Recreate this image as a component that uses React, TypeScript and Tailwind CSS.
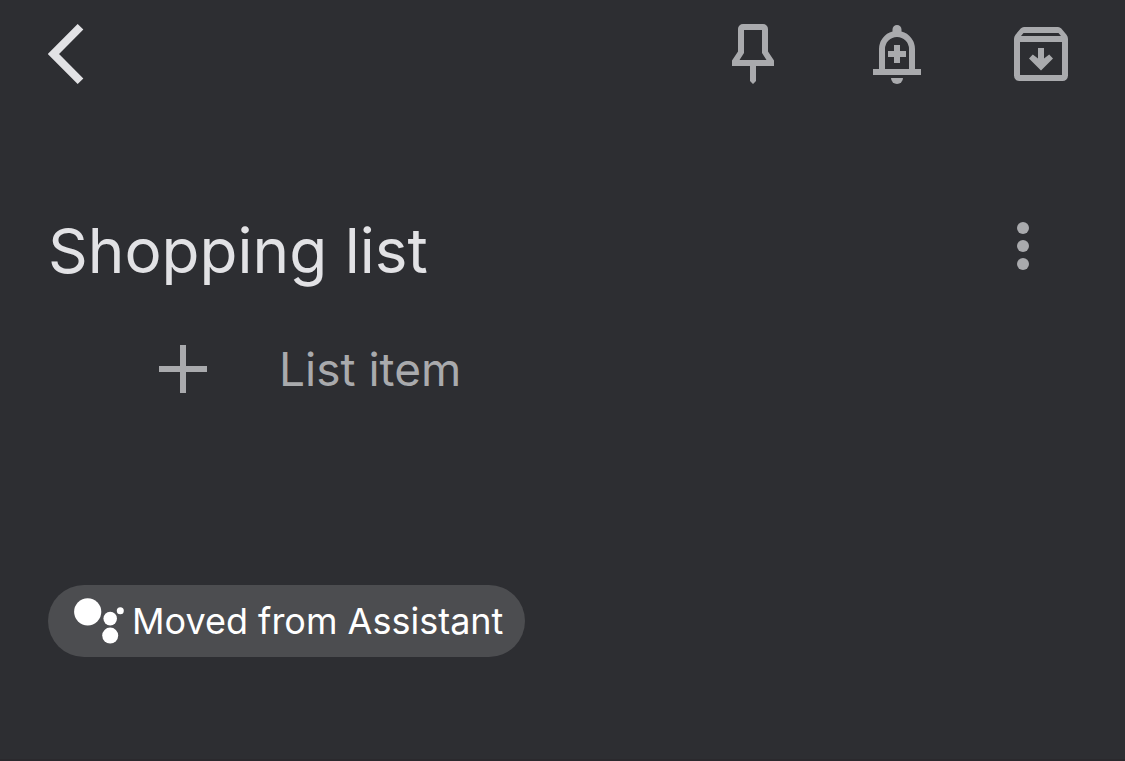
// ─── Icons ───────────────────────────────────────────────────────────────────

function BackIcon() {
  return (
    <svg className="h-[60px] w-9" viewBox="0 0 36 60" fill="none" stroke="currentColor" strokeWidth={8} aria-hidden="true">
      <path d="M32.5 2.8L5.5 30l27 27.2" />
    </svg>
  );
}

function PinIcon() {
  return (
    <svg className="size-18" viewBox="0 0 72 72" fill="currentColor" aria-hidden="true">
      <path
        fillRule="evenodd"
        d="M26 6h20a5 5 0 0 1 5 5v22.500l6 9V48H39v15l-3 3-3-3V48H15v-5.500l6-9V11a5 5 0 0 1 5-5zm1 6v23l-4.500 7h27L45 35V12z"
      />
    </svg>
  );
}

function ReminderIcon() {
  return (
    <svg className="size-18" viewBox="0 0 72 72" fill="currentColor" aria-hidden="true">
      <path
        fillRule="evenodd"
        d="M31.500 13.600V11.500a4.500 4.500 0 0 1 9 0v2.100A18 18 0 0 1 54 31v20h6v6H12v-6h6V31a18 18 0 0 1 13.500-17.400zM24 51h24V31a12 12 0 0 0-24 0z"
      />
      <path d="M33 27h6v6h6v6h-6v6h-6v-6h-6v-6h6z" />
      <path d="M30 60h12a6 6 0 0 1-12 0z" />
    </svg>
  );
}

function ArchiveIcon() {
  return (
    <svg className="size-18" viewBox="0 0 72 72" fill="currentColor" aria-hidden="true">
      <path
        fillRule="evenodd"
        d="M19 9h34q2 0 3.300 1.500l5.200 6.200Q63 18.500 63 21v36.500a5.500 5.500 0 0 1-5.500 5.500h-43A5.500 5.500 0 0 1 9 57.500V21q0-2.500 1.500-4.300l5.200-6.200Q17 9 19 9zm-.500 6L16 18h40l-2.500-3zM15 24v33h42V24z"
      />
      <path d="M33 30h6v10.500l5.200-3.900 3.800 3.900-12 12-12-12 3.800-3.900 5.200 3.900z" />
    </svg>
  );
}

function MoreIcon() {
  return (
    <svg className="h-12 w-3" viewBox="0 0 12 48" fill="currentColor" aria-hidden="true">
      <circle cx="6" cy="6" r="6" />
      <circle cx="6" cy="24" r="6" />
      <circle cx="6" cy="42" r="6" />
    </svg>
  );
}

function PlusIcon() {
  return (
    <svg className="size-12" viewBox="0 0 48 48" fill="currentColor" aria-hidden="true">
      <path d="M21 0h6v21h21v6H27v21h-6V27H0v-6h21z" />
    </svg>
  );
}

function AssistantIcon() {
  return (
    <svg className="h-[46px] w-[50px]" viewBox="0 0 50 46" fill="currentColor" aria-hidden="true">
      <circle cx="13.700" cy="13.800" r="13.600" />
      <circle cx="36.200" cy="20.600" r="6.800" />
      <circle cx="46.300" cy="12.700" r="3.500" />
      <circle cx="36.200" cy="37.600" r="8" />
    </svg>
  );
}

// ─── Page ────────────────────────────────────────────────────────────────────

const actions = [
  { label: "Pin note", Icon: PinIcon },
  { label: "Add reminder", Icon: ReminderIcon },
  { label: "Archive", Icon: ArchiveIcon },
];

export default function App() {
  return (
    <div className="min-h-screen border-b-2 border-[#2a292d] bg-[#2d2e32] font-['Inter',sans-serif] text-[#a9aaad]">
      {/* Toolbar */}
      <header className="flex items-center justify-between px-12 py-[18px]">
        <button type="button" aria-label="Back" className="text-[#e2e2e5]">
          <BackIcon />
        </button>
        <div className="flex gap-18">
          {actions.map(({ label, Icon }) => (
            <button key={label} type="button" aria-label={label}>
              <Icon />
            </button>
          ))}
        </div>
      </header>

      <main className="px-12 pt-24">
        {/* Title */}
        <div className="flex items-start justify-between pr-12">
          <h1 className="text-[62px] leading-[94px] text-[#e2e2e5]">Shopping list</h1>
          <button type="button" aria-label="More options" className="pt-[18px]">
            <MoreIcon />
          </button>
        </div>

        {/* New item */}
        <button type="button" className="mt-[35px] ml-[111px] flex items-center gap-18 text-[46px] leading-[72px]">
          <PlusIcon />
          <span>List item</span>
        </button>

        {/* Source label */}
        <div className="mt-[180px] flex">
          <a href="#assistant" className="flex h-18 items-center gap-2 rounded-full bg-[#4c4d50] pr-[22px] pl-[26px] text-[36px] text-white">
            <AssistantIcon />
            <span>Moved from Assistant</span>
          </a>
        </div>
      </main>
    </div>
  );
}
